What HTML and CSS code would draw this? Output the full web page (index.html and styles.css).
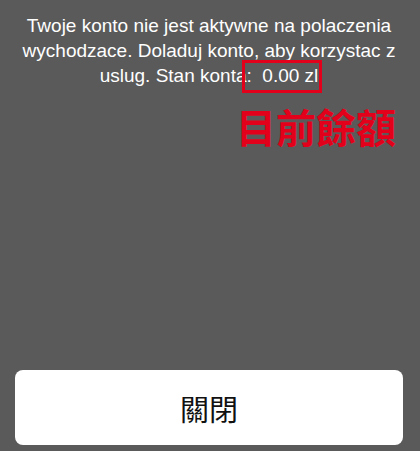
FILE: index.html
```html
<!DOCTYPE html>
<html lang="pl">
<head>
    <meta charset="UTF-8">
    <meta name="viewport" content="width=device-width, initial-scale=1.0">
    <title>Stan konta</title>
    <link rel="stylesheet" href="styles.css">
</head>
<body>
    <div class="dialog">
        <div class="message-area">
            <p class="message">Twoje konto nie jest aktywne na polaczenia wychodzace. Doladuj konto, aby korzystac z uslug. Stan konta:&nbsp; 0.00 zl</p>
            <div class="highlight-box"></div>
            <div class="note">目前餘額</div>
        </div>
        <button class="close-btn">關閉</button>
    </div>
</body>
</html>
```

FILE: styles.css
```css
body {
    margin: 0;
    background: #5a5a5a;
    font-family: 'Liberation Sans', Arial, 'Noto Sans CJK TC', sans-serif;
}

.dialog {
    height: 451px;
    display: flex;
    flex-direction: column;
    box-sizing: border-box;
    padding: 0 17px 6px 15px;
}

.message-area {
    position: relative;
    flex: 1;
}

.message {
    margin: 0;
    padding-top: 13px;
    color: #ffffff;
    font-size: 19px;
    line-height: 25px;
    text-align: center;
}

.highlight-box {
    position: absolute;
    left: 227px;
    top: 60px;
    width: 74px;
    height: 27px;
    border: 3px solid #e2001a;
}

.note {
    margin: 16px 0 0 221px;
    color: #e2001a;
    font-family: 'Noto Sans CJK TC', sans-serif;
    font-size: 40px;
    font-weight: bold;
    line-height: 44px;
}

.close-btn {
    height: 75px;
    border: none;
    border-radius: 8px;
    background: #ffffff;
    color: #111111;
    font-family: 'Noto Sans CJK TC', sans-serif;
    font-size: 29px;
    cursor: pointer;
}
```
